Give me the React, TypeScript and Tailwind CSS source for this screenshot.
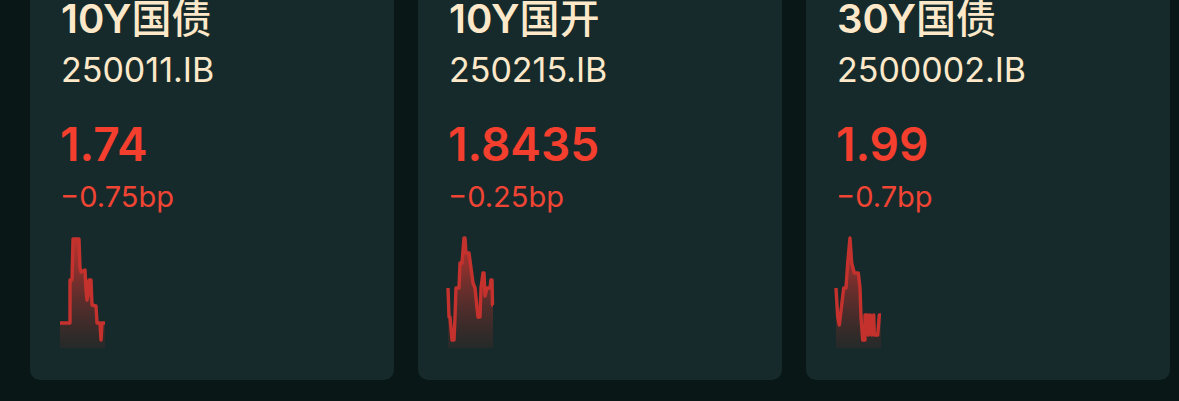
import React from "react";

type Bond = {
  name: string;
  code: string;
  price: string;
  change: string;
  points: [number, number][];
};

const bonds: Bond[] = [
  {
    name: "10Y国债",
    code: "250011.IB",
    price: "1.74",
    change: "−0.75bp",
    points: [
      [0, 85], [10, 85], [10, 42], [12, 42], [13, 1], [19, 1], [20, 30], [21, 34],
      [25, 32], [26, 52], [27, 62], [28, 58], [29, 42], [31, 42], [32, 67], [36, 68],
      [37, 85], [40, 85], [41, 102], [42, 85], [45, 85],
    ],
  },
  {
    name: "10Y国开",
    code: "250215.IB",
    price: "1.8435",
    change: "−0.25bp",
    points: [
      [0, 50], [1, 79], [2, 79], [3, 90], [4, 102], [6, 102], [7, 79], [8, 50],
      [11, 50], [12, 25], [14, 25], [16, 0], [17, 0], [18, 15], [21, 15], [23, 30],
      [25, 45], [27, 50], [29, 70], [30, 79], [32, 79], [33, 50], [35, 35], [36, 35],
      [37, 58], [39, 50], [42, 50], [43, 42], [44, 42], [44.5, 67], [45, 67],
    ],
  },
  {
    name: "30Y国债",
    code: "2500002.IB",
    price: "1.99",
    change: "−0.7bp",
    points: [
      [0, 50], [1.7, 79], [3.3, 87], [4.3, 79], [7.7, 50], [10, 50], [11.7, 25],
      [14, 0], [15.7, 25], [18.3, 35], [22.3, 35], [24, 50], [25, 79], [26.7, 102],
      [29, 102], [29, 77], [31.7, 77], [32.3, 97], [34.3, 77], [35.7, 97], [37.7, 77],
      [38.3, 97], [41.7, 97], [43.3, 77], [45, 77],
    ],
  },
];

function Spark({ points, id }: { points: [number, number][]; id: string }) {
  const line = points.map(([x, y], i) => `${i ? "L" : "M"}${x} ${y}`).join(" ");
  const area = `${line} L45 110 L0 110 Z`;
  return (
    <svg width="45" height="110" viewBox="0 0 45 110" className="block overflow-visible">
      <defs>
        <linearGradient id={id} x1="0" y1="0" x2="0" y2="1">
          <stop offset="0%" stopColor="#c8342f" stopOpacity="0.95" />
          <stop offset="100%" stopColor="#2e2a28" stopOpacity="0.6" />
        </linearGradient>
      </defs>
      <path d={area} fill={`url(#${id})`} />
      <path d={line} fill="none" stroke="#c5322e" strokeWidth="3.4" strokeLinejoin="round" />
    </svg>
  );
}

export default function App() {
  return (
    <div
      className="w-[1179px] h-[401px] overflow-hidden bg-[#0a1717]"
      style={{ fontFamily: 'Inter, "Noto Sans CJK SC", sans-serif' }}
    >
      <div className="flex gap-[24px] pl-[30px] -mt-[20px]">
        {bonds.map((b, i) => (
          <div key={b.code} className="w-[364px] shrink-0 rounded-[10px] bg-[#172a2b] pt-[19px] pb-[32px] px-[30px]">
            <div className="pl-[1px] text-[40px] leading-none font-semibold text-[#fde9c9]">
              {b.name.slice(0, 3)}
              <span className="font-medium">{b.name.slice(3)}</span>
            </div>
            <div className="pl-[1px] mt-[14px] text-[34px] leading-none text-[#fde9c9]">{b.code}</div>
            <div className="mt-[34px] text-[46px] leading-none font-semibold text-[#f43f2f]">{b.price}</div>
            <div className="mt-[15px] text-[29px] leading-none text-[#f04434]">{b.change}</div>
            <div className="mt-[27px]">
              <Spark points={b.points} id={`g${i}`} />
            </div>
          </div>
        ))}
      </div>
    </div>
  );
}
